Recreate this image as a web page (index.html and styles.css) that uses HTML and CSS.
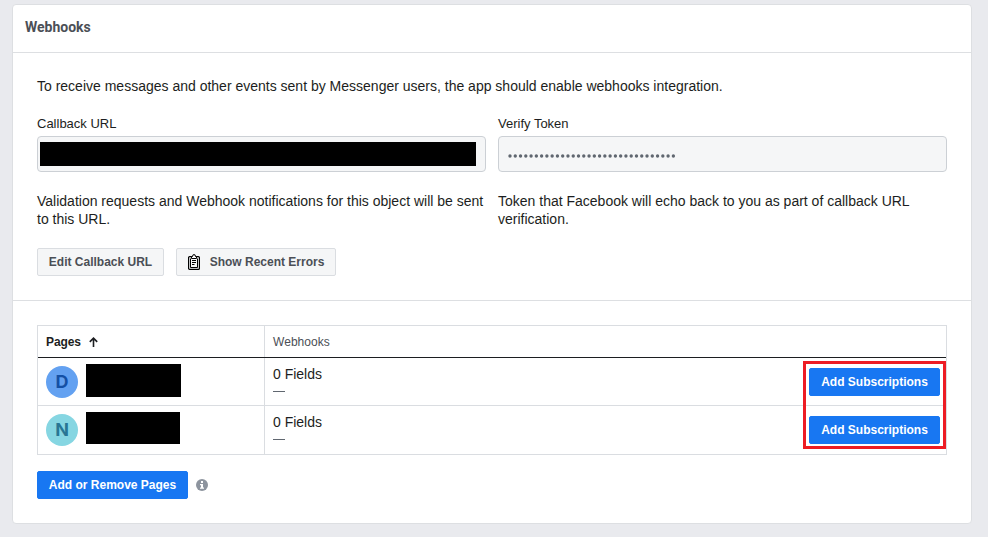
FILE: index.html
```html
<!DOCTYPE html>
<html lang="en">
<head>
<meta charset="utf-8">
<title>Webhooks</title>
<link rel="stylesheet" href="styles.css">
</head>
<body>
<main class="card">
  <header class="card-header"><h1>Webhooks</h1></header>
  <section class="setup">
    <p class="intro">To receive messages and other events sent by Messenger users, the app should enable webhooks integration.</p>
    <div class="fields">
      <div class="field">
        <div class="label">Callback URL</div>
        <div class="input"><span class="mask mask-url"></span></div>
        <p class="help">Validation requests and Webhook notifications for this object will be sent<br>to this URL.</p>
      </div>
      <div class="field">
        <div class="label">Verify Token</div>
        <div class="input"><svg class="dots" width="170" height="6" viewBox="0 0 170 6"><path d="M2 3H167" stroke="#606770" stroke-width="3.4" stroke-linecap="round" stroke-dasharray="0 5.27"/></svg></div>
        <p class="help">Token that Facebook will echo back to you as part of callback URL<br>verification.</p>
      </div>
    </div>
    <div class="actions">
      <button class="btn edit">Edit Callback URL</button>
      <button class="btn errors">
        <svg width="12" height="16" viewBox="0 0 12 16" fill="none" stroke="#000"><rect x=".6" y="2.6" width="10.8" height="12.8" rx="1" stroke-width="1.2"/><path d="M2.500 4.500V13.500H9.500V4.500" stroke-width="1"/><path d="M3.500 4.500V2.500H4.500L5 .8H7L7.500 2.500H8.500V4.500Z" fill="#fff"/><path d="M4 6.500H8M4 8.500H8M4 10.500H6.500"/></svg>
        <span>Show Recent Errors</span>
      </button>
    </div>
  </section>
  <section class="pages">
    <div class="table">
      <div class="row head">
        <div class="cell page-col"><span class="pages-label">Pages</span><svg width="9" height="10" viewBox="0 0 9 10" fill="none" stroke="#1c1e21" stroke-width="1.6"><path d="M4.500 10V1.500M.8 4.900L4.500 1.200L8.200 4.900"/></svg></div>
        <div class="cell hooks-col">Webhooks</div>
      </div>
      <div class="row">
        <div class="cell page-col"><span class="avatar blue">D</span><span class="mask mask-d"></span></div>
        <div class="cell hooks-col"><div class="count">0 Fields<span class="dash"></span></div><button class="btn primary sub">Add Subscriptions</button></div>
      </div>
      <div class="row last">
        <div class="cell page-col"><span class="avatar teal">N</span><span class="mask mask-n"></span></div>
        <div class="cell hooks-col"><div class="count">0 Fields<span class="dash"></span></div><button class="btn primary sub">Add Subscriptions</button></div>
      </div>
      <div class="highlight"></div>
    </div>
    <div class="footer">
      <button class="btn primary add">Add or Remove Pages</button>
      <svg width="12" height="12" viewBox="0 0 12 12"><circle cx="6" cy="6" r="6" fill="#8d949e"/><path d="M5 2H7V4H5ZM4 5H7V8.500H8V9.800H4V8.500H5V6.200H4Z" fill="#fff"/></svg>
    </div>
  </section>
</main>
</body>
</html>
```
FILE: styles.css
```css
* { box-sizing: border-box; }
body {
  margin: 0;
  padding: 4px 16px 0 12px;
  height: 537px;
  overflow: hidden;
  background: #e9eaee;
  color: #1c1e21;
  font: 14px/18px "Liberation Sans", Arial, sans-serif;
}
h1, p { margin: 0; font: inherit; }
.card {
  height: 520px;
  background: #fff;
  border: 1px solid #dddfe2;
  border-radius: 4px;
}
.card-header {
  height: 48px;
  padding: 13px 12px 0;
  border-bottom: 1px solid #dddfe2;
}
.card-header h1 {
  color: #4b4f56;
  font: bold 14px/18px Roboto, sans-serif;
}
.setup {
  height: 248px;
  padding: 24px 24px 0;
  border-bottom: 1px solid #dddfe2;
}
.intro { white-space: nowrap; }
.fields { display: flex; gap: 12px; margin-top: 20px; }
.field { width: 449px; white-space: nowrap; }
.label { height: 21px; font-size: 13px; line-height: 17px; }
.input {
  display: flex;
  align-items: center;
  height: 36px;
  padding: 0 2px;
  background: #f5f6f7;
  border: 1px solid #ccd0d5;
  border-radius: 4px;
}
.dots { margin: 3px 0 0 7px; }
.mask { background: #000; }
.mask-url { width: 436px; height: 24px; }
.help { margin-top: 20px; }
.actions { display: flex; gap: 12px; margin-top: 20px; }
.btn {
  display: flex;
  align-items: center;
  justify-content: center;
  height: 28px;
  padding: 0;
  border: 1px solid #dadde1;
  border-radius: 2px;
  background: #f5f6f7;
  color: #4b4f56;
  font: bold 12px/26px "Liberation Sans", Arial, sans-serif;
  white-space: nowrap;
}
.edit { width: 127px; }
.errors { width: 160px; gap: 10px; }
.primary { background: #1877f2; border-color: #1877f2; color: #fff; }
.table {
  position: relative;
  height: 130px;
  border: 1px solid #dadde1;
}
.pages { padding: 24px 24px 0; }
.row { display: flex; height: 48px; border-bottom: 1px solid #dadde1; }
.row.head { height: 32px; border-bottom-color: #1c1e21; font-size: 12px; }
.row.last { border-bottom: 0; }
.cell { display: flex; align-items: center; padding-left: 8px; }
.last .cell { padding-bottom: 1px; }
.page-col { width: 227px; border-right: 1px solid #dadde1; }
.page-col, .hooks-col { flex-shrink: 0; }
.hooks-col { width: 681px; }
.head .page-col { gap: 8px; }
.head .hooks-col { color: #4b4f56; letter-spacing: .05px; }
.pages-label { font-weight: bold; letter-spacing: -.1px; }
.avatar {
  width: 32px;
  height: 32px;
  margin-top: 1px;
  border-radius: 50%;
  text-align: center;
  font: bold 18px/32px Inter, sans-serif;
}
.blue { background: #63a1f1; color: #1450a5; }
.teal { background: #86d6e2; color: #287694; }
.mask-d, .mask-n { align-self: flex-start; margin: 6px 0 0 8px; }
.mask-d { width: 95px; height: 33px; }
.mask-n { width: 94px; height: 32px; }
.count { align-self: flex-start; padding-top: 7px; }
.dash { display: block; width: 12px; height: 1px; margin-top: 8px; background: #606770; }
.sub { width: 131px; margin: 1px 6px 0 auto; }
.highlight {
  position: absolute;
  top: 35px;
  right: 0;
  width: 143px;
  height: 88px;
  border: 3px solid #ed1c24;
}
.footer { display: flex; align-items: center; gap: 8px; margin-top: 16px; }
.add { width: 151px; }
```
